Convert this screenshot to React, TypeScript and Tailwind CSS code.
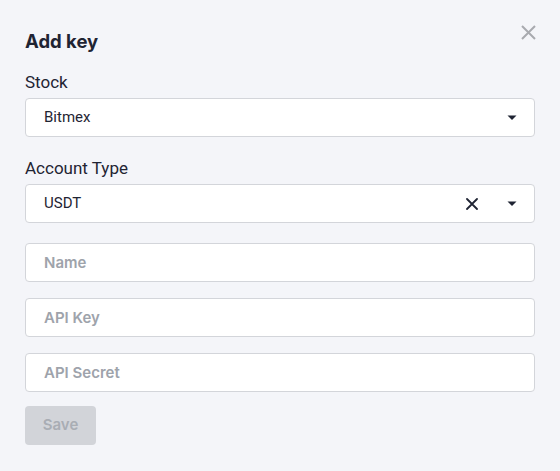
import React from 'react';

const Caret = () => (
  <svg width="10" height="6" viewBox="0 0 10 6" className="shrink-0">
    <path d="M0.5 0.5 H9.5 L5 5 Z" fill="#1f2433" />
  </svg>
);

function SelectBox({ value, clearable }: { value: string; clearable?: boolean }) {
  return (
    <div className="flex h-[39px] items-center rounded-[4px] border border-[#d3d5da] bg-white pl-[18px] pr-[17px]">
      <span className="flex-1 text-[15px] text-[#1f2433]">{value}</span>
      {clearable && (
        <svg width="12" height="12" viewBox="0 0 12 12" className="mr-[29px]">
          <path d="M1 1 L11 11 M11 1 L1 11" stroke="#1f2433" strokeWidth="1.8" strokeLinecap="round" />
        </svg>
      )}
      <Caret />
    </div>
  );
}

function TextField({ placeholder }: { placeholder: string }) {
  return (
    <input
      placeholder={placeholder}
      className="block h-[39px] w-full rounded-[4px] border border-[#d3d5da] bg-white pl-[18px] text-[15px] font-semibold text-[#1f2433] outline-none placeholder:text-[#9ea3ab] [font-family:Inter,sans-serif]"
    />
  );
}

export default function App() {
  return (
    <div className="relative h-[471px] w-[560px] bg-[#f4f5f9] px-[25px] pt-[27px] [font-family:Roboto,sans-serif]">
      <button type="button" className="absolute right-[24px] top-[25px] h-[15px] w-[15px]">
        <svg width="15" height="15" viewBox="0 0 15 15">
          <path d="M1 1 L14 14 M14 1 L1 14" stroke="#a8aaaf" strokeWidth="2" />
        </svg>
      </button>

      <h2 className="h-[28px] text-[18.5px] font-bold leading-[28px] text-[#1f2433] [font-family:Inter,sans-serif]">
        Add key
      </h2>

      <div className="mt-[15px] h-[26px] text-[17px] leading-[24px] text-[#1f2433]">Stock</div>
      <div className="mt-[2px]">
        <SelectBox value="Bitmex" />
      </div>

      <div className="mt-[19px] h-[26px] text-[17px] leading-[24px] text-[#1f2433]">Account Type</div>
      <div className="mt-[2px]">
        <SelectBox value="USDT" clearable />
      </div>

      <div className="mt-[20px] flex flex-col gap-[16px]">
        <TextField placeholder="Name" />
        <TextField placeholder="API Key" />
        <TextField placeholder="API Secret" />
      </div>

      <button
        type="button"
        disabled
        className="mt-[14px] h-[39px] w-[71px] rounded-[4px] bg-[#d2d4d9] text-[15px] font-semibold text-[#a9adb4] [font-family:Inter,sans-serif]"
      >
        Save
      </button>
    </div>
  );
}
